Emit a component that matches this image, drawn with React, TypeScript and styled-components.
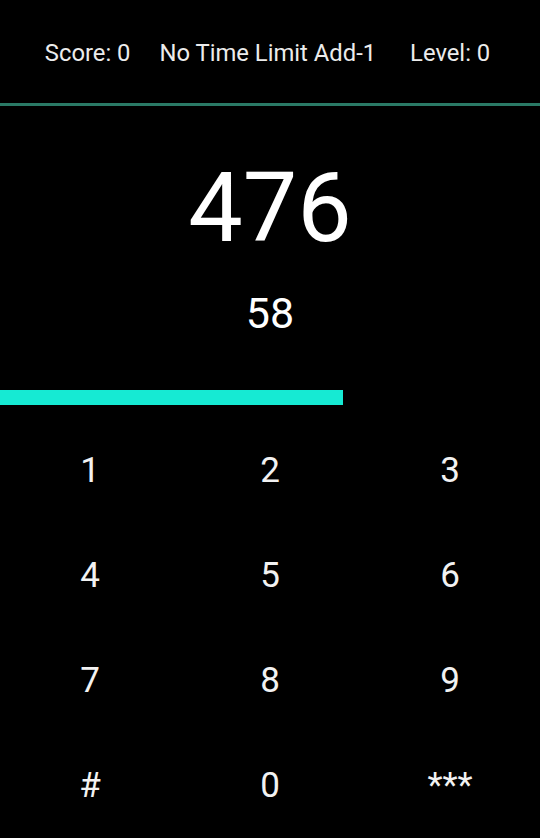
import React from "react";
import styled, { createGlobalStyle } from "styled-components";

const Global = createGlobalStyle`
  html, body { margin: 0; padding: 0; background: #000; }
  body { font-family: Roboto, "Noto Sans", sans-serif; color: #fff; }
`;

const Screen = styled.div`
  width: 540px;
  height: 838px;
  background: #000;
  display: flex;
  flex-direction: column;
  overflow: hidden;
  & > * { flex-shrink: 0; }
`;

const Header = styled.div`
  height: 103px;
  display: flex;
  align-items: center;
  justify-content: center;
  gap: 29px;
  border-bottom: 3px solid #2a7a66;
  padding-right: 5px;
`;

const HeaderItem = styled.span<{ $extra?: number }>`
  font-size: 23.8px;
  line-height: 28px;
  color: #ececec;
  padding-top: 2px;
  margin-left: ${(p) => p.$extra ?? 0}px;
`;

const Display = styled.div`
  display: flex;
  flex-direction: column;
  align-items: center;
  padding-top: 46px;
`;

const Target = styled.div`
  font-size: 97px;
  line-height: 112px;
  color: #fff;
`;

const Current = styled.div`
  font-size: 43px;
  line-height: 50px;
  margin-top: 24px;
  color: #fff;
`;

const TimerTrack = styled.div`
  height: 15px;
  width: 100%;
  margin-top: 52px;
`;

const TimerFill = styled.div`
  height: 100%;
  background: #16ead3;
`;

const Keypad = styled.div`
  margin-top: 13px;
  display: grid;
  grid-template-columns: repeat(3, 180px);
  grid-auto-rows: 105px;
`;

const Key = styled.button`
  background: transparent;
  border: none;
  color: #f2f2f2;
  font-family: Roboto, "Noto Sans", sans-serif;
  font-size: 35px;
  display: flex;
  align-items: center;
  justify-content: center;
  padding: 0;
`;

const keys = ["1", "2", "3", "4", "5", "6", "7", "8", "9", "#", "0", "***"];

export default function App() {
  const progress = 343 / 540;
  return (
    <Screen>
      <Global />
      <Header>
        <HeaderItem>Score: 0</HeaderItem>
        <HeaderItem>No Time Limit Add-1</HeaderItem>
        <HeaderItem $extra={5}>Level: 0</HeaderItem>
      </Header>
      <Display>
        <Target>476</Target>
        <Current>58</Current>
      </Display>
      <TimerTrack>
        <TimerFill style={{ width: `${progress * 100}%` }} />
      </TimerTrack>
      <Keypad>
        {keys.map((k) => (
          <Key key={k}>{k}</Key>
        ))}
      </Keypad>
    </Screen>
  );
}
